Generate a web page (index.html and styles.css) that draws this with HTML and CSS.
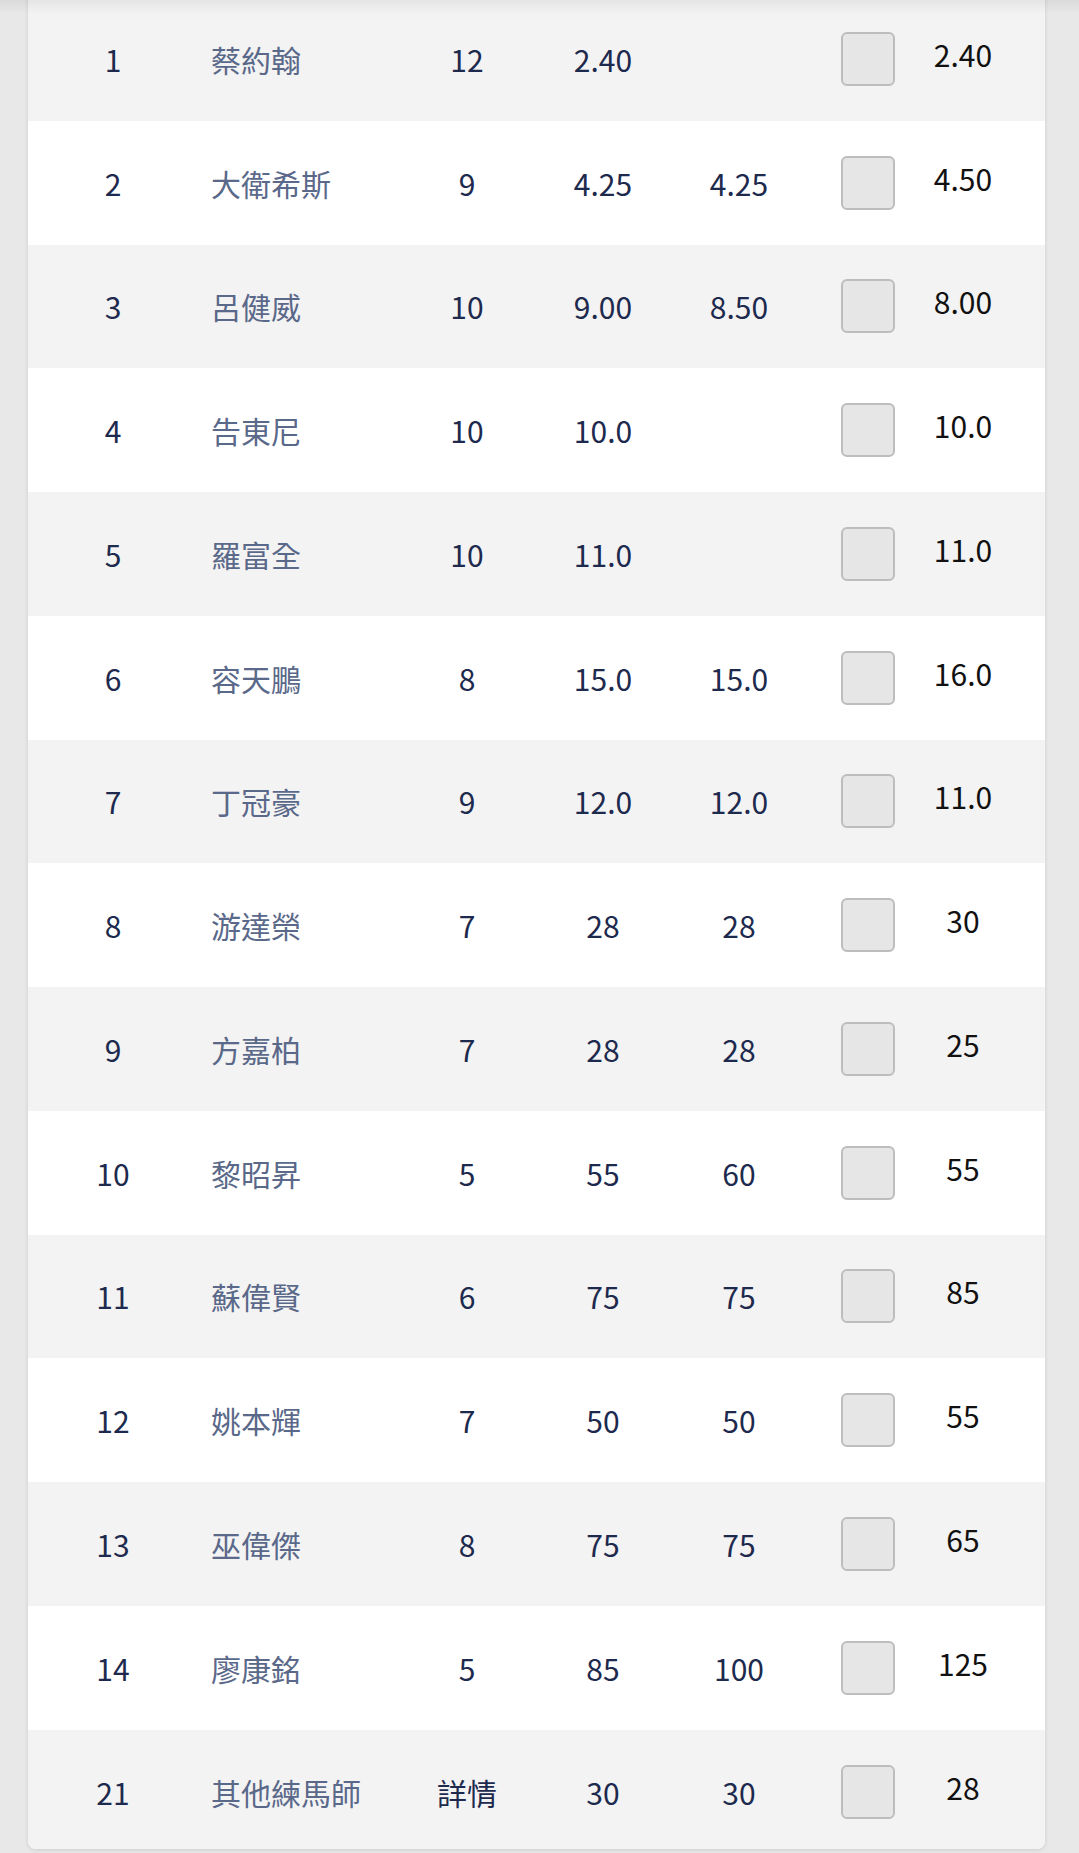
FILE: index.html
```html
<!DOCTYPE html>
<html lang="zh-Hant">
<head>
<meta charset="utf-8">
<link rel="stylesheet" href="styles.css">
</head>
<body>
<div class="topshade"></div>
<div class="card">
  <div class="row"><div class="c no">1</div><div class="c name">蔡約翰</div><div class="c">12</div><div class="c">2.40</div><div class="c"></div><div class="c"><span class="box"></span></div><div class="c last">2.40</div></div>
  <div class="row"><div class="c no">2</div><div class="c name">大衛希斯</div><div class="c">9</div><div class="c">4.25</div><div class="c">4.25</div><div class="c"><span class="box"></span></div><div class="c last">4.50</div></div>
  <div class="row"><div class="c no">3</div><div class="c name">呂健威</div><div class="c">10</div><div class="c">9.00</div><div class="c">8.50</div><div class="c"><span class="box"></span></div><div class="c last">8.00</div></div>
  <div class="row"><div class="c no">4</div><div class="c name">告東尼</div><div class="c">10</div><div class="c">10.0</div><div class="c"></div><div class="c"><span class="box"></span></div><div class="c last">10.0</div></div>
  <div class="row"><div class="c no">5</div><div class="c name">羅富全</div><div class="c">10</div><div class="c">11.0</div><div class="c"></div><div class="c"><span class="box"></span></div><div class="c last">11.0</div></div>
  <div class="row"><div class="c no">6</div><div class="c name">容天鵬</div><div class="c">8</div><div class="c">15.0</div><div class="c">15.0</div><div class="c"><span class="box"></span></div><div class="c last">16.0</div></div>
  <div class="row"><div class="c no">7</div><div class="c name">丁冠豪</div><div class="c">9</div><div class="c">12.0</div><div class="c">12.0</div><div class="c"><span class="box"></span></div><div class="c last">11.0</div></div>
  <div class="row"><div class="c no">8</div><div class="c name">游達榮</div><div class="c">7</div><div class="c">28</div><div class="c">28</div><div class="c"><span class="box"></span></div><div class="c last">30</div></div>
  <div class="row"><div class="c no">9</div><div class="c name">方嘉柏</div><div class="c">7</div><div class="c">28</div><div class="c">28</div><div class="c"><span class="box"></span></div><div class="c last">25</div></div>
  <div class="row"><div class="c no">10</div><div class="c name">黎昭昇</div><div class="c">5</div><div class="c">55</div><div class="c">60</div><div class="c"><span class="box"></span></div><div class="c last">55</div></div>
  <div class="row"><div class="c no">11</div><div class="c name">蘇偉賢</div><div class="c">6</div><div class="c">75</div><div class="c">75</div><div class="c"><span class="box"></span></div><div class="c last">85</div></div>
  <div class="row"><div class="c no">12</div><div class="c name">姚本輝</div><div class="c">7</div><div class="c">50</div><div class="c">50</div><div class="c"><span class="box"></span></div><div class="c last">55</div></div>
  <div class="row"><div class="c no">13</div><div class="c name">巫偉傑</div><div class="c">8</div><div class="c">75</div><div class="c">75</div><div class="c"><span class="box"></span></div><div class="c last">65</div></div>
  <div class="row"><div class="c no">14</div><div class="c name">廖康銘</div><div class="c">5</div><div class="c">85</div><div class="c">100</div><div class="c"><span class="box"></span></div><div class="c last">125</div></div>
  <div class="row final"><div class="c no">21</div><div class="c name">其他練馬師</div><div class="c">詳情</div><div class="c">30</div><div class="c">30</div><div class="c"><span class="box"></span></div><div class="c last">28</div></div>
</div>
</body>
</html>
```

FILE: styles.css
```css
html, body {
  margin: 0;
  padding: 0;
  background: #e8e8e8;
}
body {
  font-family: "Noto Sans CJK TC", "Noto Sans", sans-serif;
  height: 1853px;
  overflow: hidden;
}
.topshade {
  position: absolute;
  left: 0;
  top: 0;
  width: 100%;
  height: 14px;
  background: linear-gradient(rgba(0,0,0,0.06), rgba(0,0,0,0));
  z-index: 2;
}
.card {
  margin: -3px 34px 0 28px;
  background: #fff;
  border-radius: 0 0 8px 8px;
  overflow: hidden;
  box-shadow: 0 1px 4px rgba(0,0,0,0.12);
}
.row {
  display: grid;
  grid-template-columns: 170px 202px 134px 138px 134px 124px 66px;
  height: 123.75px;
  align-items: center;
  background: #fff;
  font-size: 30px;
  color: #1d2a4d;
}
.row:nth-child(odd) {
  background: #f3f3f3;
}
.row.final {
  height: 119.5px;
  padding-top: 6px;
  box-sizing: border-box;
  align-items: start;
}
.row.final .c {
  height: 112px;
  display: flex;
  align-items: center;
  justify-content: center;
}
.row.final .c.name {
  justify-content: flex-start;
}
.c {
  text-align: center;
  line-height: 1;
}
.c.name {
  text-align: left;
  padding-left: 13px;
  color: #5a6889;
}
.c.last {
  color: #111;
  padding-bottom: 10px;
}
.row.final .c.last {
  box-sizing: border-box;
}
.box {
  display: inline-block;
  width: 54px;
  height: 54px;
  box-sizing: border-box;
  background: #e6e6e6;
  border: 2px solid #bdbdbd;
  border-radius: 6px;
  vertical-align: middle;
}
```
